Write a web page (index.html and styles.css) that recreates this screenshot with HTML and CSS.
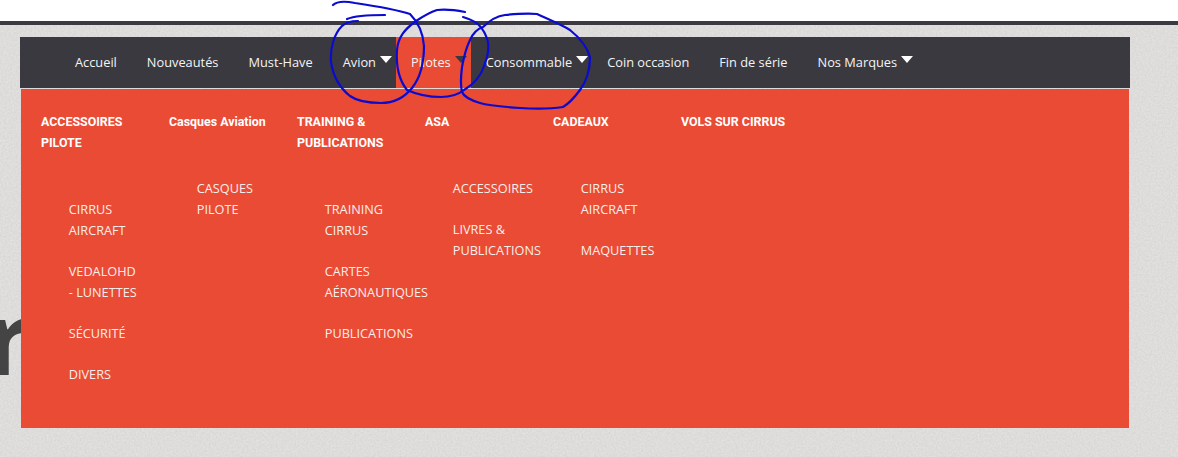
FILE: index.html
```html
<!DOCTYPE html>
<html lang="fr">
<head>
    <meta charset="UTF-8">
    <meta name="viewport" content="width=device-width, initial-scale=1.0">
    <title>Cirrus Boutique</title>
    <link rel="stylesheet" href="styles.css">
</head>
<body>
    <!-- grain du fond gris -->
    <svg class="texture" width="1178" height="457">
        <filter id="grain">
            <feTurbulence type="fractalNoise" baseFrequency="0.55" numOctaves="2" seed="4"/>
            <feColorMatrix values="0 0 0 0 0.35  0 0 0 0 0.35  0 0 0 0 0.35  0.3 0 0 0 -0.08"/>
        </filter>
        <rect width="1178" height="457" filter="url(#grain)"/>
    </svg>

    <header class="top-bar"></header>

    <nav class="main-nav">
        <a href="#" class="nav-item">Accueil</a>
        <a href="#" class="nav-item">Nouveautés</a>
        <a href="#" class="nav-item">Must-Have</a>
        <a href="#" class="nav-item has-arrow">Avion</a>
        <a href="#" class="nav-item has-arrow active">Pilotes</a>
        <a href="#" class="nav-item has-arrow">Consommable</a>
        <a href="#" class="nav-item">Coin occasion</a>
        <a href="#" class="nav-item">Fin de série</a>
        <a href="#" class="nav-item has-arrow">Nos Marques</a>

        <!-- menu ouvert sur Pilotes -->
        <div class="mega-menu">
            <div class="menu-column">
                <h3>ACCESSOIRES PILOTE</h3>
                <ul>
                    <li><a href="#">CIRRUS AIRCRAFT</a></li>
                    <li><a href="#">VEDALOHD<br>- LUNETTES</a></li>
                    <li><a href="#">SÉCURITÉ</a></li>
                    <li><a href="#">DIVERS</a></li>
                </ul>
            </div>
            <div class="menu-column">
                <h3>Casques Aviation</h3>
                <ul>
                    <li><a href="#">CASQUES PILOTE</a></li>
                </ul>
            </div>
            <div class="menu-column">
                <h3>TRAINING &amp; PUBLICATIONS</h3>
                <ul>
                    <li><a href="#">TRAINING CIRRUS</a></li>
                    <li><a href="#">CARTES AÉRONAUTIQUES</a></li>
                    <li><a href="#">PUBLICATIONS</a></li>
                </ul>
            </div>
            <div class="menu-column">
                <h3>ASA</h3>
                <ul>
                    <li><a href="#">ACCESSOIRES</a></li>
                    <li><a href="#">LIVRES &amp; PUBLICATIONS</a></li>
                </ul>
            </div>
            <div class="menu-column">
                <h3>CADEAUX</h3>
                <ul>
                    <li><a href="#">CIRRUS AIRCRAFT</a></li>
                    <li><a href="#">MAQUETTES</a></li>
                </ul>
            </div>
            <div class="menu-column">
                <h3>VOLS SUR CIRRUS</h3>
            </div>
        </div>
    </nav>

    <h1 class="hero-title">r</h1>

    <!-- traits au stylo par-dessus la capture -->
    <svg class="scribbles" width="1178" height="457" viewBox="0 0 1178 457" fill="none">
        <path d="M333 5C337 1 345 1 355 3C375 6 395 9 410 14C418 22 423 32 424 46C424 62 420 78 412 88C404 98 394 103 381 103C368 103 357 101 350 96C340 88 333 76 331 62C330 48 334 34 342 26C346 22 352 21 358 21"/>
        <path d="M347 19C354 16 370 15 385 15"/>
        <path d="M465 12C455 10 445 9 437 10C428 13 422 17 416 21C405 29 398 37 397 50C396 65 399 80 407 90C418 95 430 97 441 97C452 97 459 94 464 90C474 84 481 76 484 66C488 56 489 48 488 42C486 34 482 28 478 24C472 20 467 18 463 17"/>
        <path d="M483 27C490 20 497 16 505 15C515 14 527 13 537 14C550 20 562 25 570 30C580 38 587 47 590 57C590 70 586 82 580 90C574 98 570 103 563 107C550 109 535 109 520 108C505 107 490 106 480 103C470 100 464 97 462 92C460 84 461 75 462 67C464 56 466 48 470 40C473 33 477 29 483 27"/>
    </svg>
</body>
</html>
```

FILE: styles.css
```css
html, body {
    height: 100%;
    margin: 0;
    padding: 0;
}

body {
    position: relative;
    overflow: hidden;
    background-color: #e2e1df;
    font-family: "Open Sans", "Liberation Sans", sans-serif;
}

.texture {
    position: absolute;
    top: 0;
    left: 0;
}

.top-bar {
    position: relative;
    height: 21px;
    background-color: #ffffff;
    border-bottom: 4px solid #3b3a40;
}

.main-nav {
    position: relative;
    z-index: 2;
    display: flex;
    height: 51px;
    margin: 12px 48px 0 20px;
    padding-left: 40px;
    background-color: #3b3940;
}

.nav-item {
    display: flex;
    align-items: center;
    padding: 0 15px 2px;
    color: #f4f4f4;
    font-size: 12.8px;
    text-decoration: none;
}

.nav-item.active {
    background-color: #e94b35;
}

.has-arrow::after {
    content: "";
    margin: -4px -11px 0 4px;
    border-top: 7px solid #ffffff;
    border-left: 6px solid transparent;
    border-right: 6px solid transparent;
}

.has-arrow.active::after {
    border-top-color: #3b3940;
}

.mega-menu {
    position: absolute;
    top: 52px;
    left: 1px;
    right: 1px;
    display: flex;
    box-sizing: border-box;
    height: 339px;
    padding: 22px 0 0 20px;
    background-color: #e94b35;
}

.menu-column {
    width: 128px;
}

.menu-column h3 {
    margin: 0;
    padding-right: 12px;
    color: #ffffff;
    font-family: Roboto, "Liberation Sans", sans-serif;
    font-size: 12.4px;
    font-weight: 700;
    line-height: 21px;
}

.menu-column ul {
    width: 100px;
    margin: 46px 0 0 27.8px;
    padding: 0;
    list-style: none;
}

.menu-column li {
    margin-bottom: 20px;
    color: #fbeeea;
    font-size: 12.7px;
    line-height: 21px;
}

.menu-column a {
    color: inherit;
    text-decoration: none;
}

.hero-title {
    position: relative;
    margin: 198px 0 0 -14px;
    color: #444444;
    font-size: 100px;
    font-weight: 700;
    line-height: 100px;
}

.scribbles {
    position: absolute;
    top: 0;
    left: 0;
    z-index: 3;
    pointer-events: none;
}

.scribbles path {
    stroke: #0b0bd0;
    stroke-width: 2.2;
    stroke-linecap: round;
}
```
